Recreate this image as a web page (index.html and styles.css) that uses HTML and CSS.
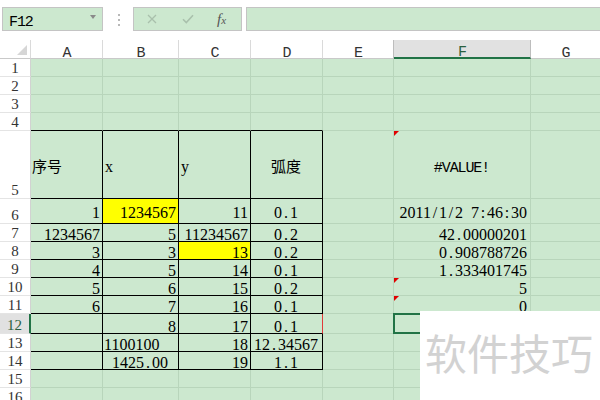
FILE: index.html
```html
<!DOCTYPE html>
<html>
<head>
<meta charset="utf-8">
<link rel="stylesheet" href="styles.css">
</head>
<body>
<div class="bar">
  <div class="namebox"><span class="nm">F12</span><span class="dd"></span></div>
  <div class="dots"><i></i><i></i><i></i></div>
  <div class="fxbox">
    <svg class="ic-x" width="10" height="10" viewBox="0 0 10 10"><path d="M1 1L9 9M9 1L1 9" stroke="#a9c0ac" stroke-width="1.3" fill="none"/></svg>
    <svg class="ic-ok" width="12" height="10" viewBox="0 0 12 10"><path d="M1 5.2L4.3 8.6L11 1.2" stroke="#a9c0ac" stroke-width="1.6" fill="none"/></svg>
    <span class="fx">f<span>x</span></span>
  </div>
  <div class="input"></div>
</div>
<div class="sheet">
  <div class="row hdr">
    <div class="ch corner"><svg width="10" height="10" viewBox="0 0 10 10"><polygon points="10,0 10,10 0,10" fill="#d6d6d6"/></svg></div>
    <div class="ch ca">A</div><div class="ch cb">B</div><div class="ch cc">C</div><div class="ch cd">D</div><div class="ch ce">E</div><div class="ch cf on">F</div><div class="ch cg">G</div>
  </div>
  <div class="row"><div class="rh">1</div><div class="c ca"></div><div class="c cb"></div><div class="c cc"></div><div class="c cd"></div><div class="c ce"></div><div class="c cf"></div><div class="c cg"></div></div>
  <div class="row"><div class="rh">2</div><div class="c ca"></div><div class="c cb"></div><div class="c cc"></div><div class="c cd"></div><div class="c ce"></div><div class="c cf"></div><div class="c cg"></div></div>
  <div class="row"><div class="rh">3</div><div class="c ca"></div><div class="c cb"></div><div class="c cc"></div><div class="c cd"></div><div class="c ce"></div><div class="c cf"></div><div class="c cg"></div></div>
  <div class="row"><div class="rh">4</div><div class="c ca tb"></div><div class="c cb tb"></div><div class="c cc tb"></div><div class="c cd tb"></div><div class="c ce"></div><div class="c cf"></div><div class="c cg"></div></div>
  <div class="row h5"><div class="rh">5</div><div class="c ca t cjk">序号</div><div class="c cb t">x</div><div class="c cc t">y</div><div class="c cd t cjk m">弧度</div><div class="c ce"></div><div class="c cf m mo"><span class="tri"></span>#VALUE!</div><div class="c cg"></div></div>
  <div class="row h6"><div class="rh">6</div><div class="c ca t r">1</div><div class="c cb t r y">1234567</div><div class="c cc t r">11</div><div class="c cd t m">0<b>.</b>1</div><div class="c ce"></div><div class="c cf r">2011<b>/</b>1<b>/</b>2<b></b>7<b>:</b>46<b>:</b>30</div><div class="c cg"></div></div>
  <div class="row"><div class="rh">7</div><div class="c ca t r">1234567</div><div class="c cb t r">5</div><div class="c cc t r">11234567</div><div class="c cd t m">0<b>.</b>2</div><div class="c ce"></div><div class="c cf r">42<b>.</b>00000201</div><div class="c cg"></div></div>
  <div class="row"><div class="rh">8</div><div class="c ca t r">3</div><div class="c cb t r">3</div><div class="c cc t r y">13</div><div class="c cd t m">0<b>.</b>2</div><div class="c ce"></div><div class="c cf r">0<b>.</b>908788726</div><div class="c cg"></div></div>
  <div class="row"><div class="rh">9</div><div class="c ca t r">4</div><div class="c cb t r">5</div><div class="c cc t r">14</div><div class="c cd t m">0<b>.</b>1</div><div class="c ce"></div><div class="c cf r">1<b>.</b>333401745</div><div class="c cg"></div></div>
  <div class="row"><div class="rh">10</div><div class="c ca t r">5</div><div class="c cb t r">6</div><div class="c cc t r">15</div><div class="c cd t m">0<b>.</b>2</div><div class="c ce"></div><div class="c cf r"><span class="tri"></span>5</div><div class="c cg"></div></div>
  <div class="row"><div class="rh">11</div><div class="c ca t r">6</div><div class="c cb t r">7</div><div class="c cc t r">16</div><div class="c cd t m">0<b>.</b>1</div><div class="c ce"></div><div class="c cf r"><span class="tri"></span>0</div><div class="c cg"></div></div>
  <div class="row h12"><div class="rh act">12</div><div class="c ca t"></div><div class="c cb t r">8</div><div class="c cc t r">17</div><div class="c cd t m red">0<b>.</b>1</div><div class="c ce"></div><div class="c cf"><span class="sel"></span></div><div class="c cg"></div></div>
  <div class="row"><div class="rh">13</div><div class="c ca t"></div><div class="c cb t">1100100</div><div class="c cc t r">18</div><div class="c cd t m">12<b>.</b>34567</div><div class="c ce"></div><div class="c cf"></div><div class="c cg"></div></div>
  <div class="row"><div class="rh">14</div><div class="c ca t"></div><div class="c cb t m">1425<b>.</b>00</div><div class="c cc t r">19</div><div class="c cd t m">1<b>.</b>1</div><div class="c ce"></div><div class="c cf"></div><div class="c cg"></div></div>
  <div class="row"><div class="rh">15</div><div class="c ca"></div><div class="c cb"></div><div class="c cc"></div><div class="c cd"></div><div class="c ce"></div><div class="c cf"></div><div class="c cg"></div></div>
  <div class="row"><div class="rh">16</div><div class="c ca"></div><div class="c cb"></div><div class="c cc"></div><div class="c cd"></div><div class="c ce"></div><div class="c cf"></div><div class="c cg"></div></div>
</div>
<div class="wm">软件技巧</div>
</body>
</html>
```

FILE: styles.css
```css
* { box-sizing: border-box; }
html, body { margin: 0; padding: 0; }
body {
  width: 600px; height: 400px; overflow: hidden; position: relative;
  background: #fff; color: #000;
  font-family: "Liberation Mono", monospace; font-size: 15px; letter-spacing: -1.1px;
}

/* formula bar */
.bar { height: 40px; display: flex; align-items: flex-start; padding-top: 7px; }
.namebox {
  margin-left: 2px; width: 101px; height: 24px; background: #cce8cf;
  border: 1px solid #c4c4c4; display: flex; align-items: flex-end;
  justify-content: space-between; padding: 0 6px 3px 6px; line-height: 9px;
}
.dd {
  align-self: flex-start; margin-top: 7px; width: 0; height: 0;
  border-left: 3.5px solid transparent; border-right: 3.5px solid transparent;
  border-top: 4px solid #8a8a8a;
}
.dots { margin-left: 15px; padding-top: 7px; display: flex; flex-direction: column; gap: 3px; }
.dots i { display: block; width: 2px; height: 2px; background: #b8b8b8; }
.fxbox {
  margin-left: 13px; width: 109px; height: 24px; background: #cce8cf;
  border: 1px solid #c4c4c4; display: flex; align-items: center; padding-left: 13px;
}
.ic-ok { margin-left: 25px; }
.fx {
  margin-left: 23px; font-family: "Liberation Serif", serif; font-style: italic;
  font-size: 15px; color: #555; letter-spacing: 0;
}
.fx span { font-size: 11px; }
.input {
  margin-left: 4px; flex: 1; height: 24px; background: #cce8cf;
  border: 1px solid #c4c4c4; margin-right: -2px;
}

/* sheet */
.row { display: flex; height: 18px; }
.row.hdr { height: 19px; }
.row.h5 { height: 68px; }
.row.h6 { height: 25px; }
.row.h12 { height: 20px; }

.ca { width: 72px; }
.cb { width: 76px; }
.cc { width: 72px; }
.cd { width: 72px; }
.ce { width: 71px; }
.cf { width: 137px; }
.cg { flex: 1; }

.ch, .rh, .c {
  display: flex; align-items: flex-end; line-height: 9px; white-space: nowrap; position: relative;
}
.ch {
  background: #fff; border-right: 1px solid #dadada; border-bottom: 1px solid #c9c9c9;
  justify-content: center; color: #333;
}
.ch.corner { width: 31px; justify-content: flex-end; padding: 0 3px 3px 0; }
.ch.on { background: #e1e1e1; border-bottom: 2px solid #217346; color: #2a6040; border-right-color: #bdbdbd; }
.ch.ce { border-right-color: #bdbdbd; }
.ch.cg { border-right: none; }

.rh {
  width: 31px; background: #fff; border-right: 1px solid #d2d2d2; border-bottom: 1px solid #e4e4e4;
  justify-content: center; padding-bottom: 3px; color: #333;
  font-family: "Liberation Serif", serif; font-size: 15px; letter-spacing: 0;
}
.rh.act { background: #e1e1e1; border-right: 2px solid #217346; color: #2a6040; }

.c {
  background: #cce8cf; border-right: 1px solid #b8d5bb; border-bottom: 1px solid #b8d5bb;
  padding: 0 2px 2px 1px;
  font-family: "Liberation Serif", serif; font-size: 16px; letter-spacing: 0;
}
.c b { display: inline-block; width: 8px; text-align: center; font-weight: normal; }
.c.cf { padding-right: 3px; }
.c.cg { border-right: none; }
.c.t { border-right-color: #000; border-bottom-color: #000; }
.c.tb { border-bottom-color: #000; }
.c.red { border-right-color: #e03a3a; }
.c.r { justify-content: flex-end; }
.c.m { justify-content: center; }
.c.y { background: #ffff00; }
.c.mo { font-family: "Liberation Mono", monospace; font-size: 15px; letter-spacing: -1.1px; }
.c.cjk { font-family: "Noto Sans CJK SC", sans-serif; font-size: 15px; letter-spacing: 0; }

.h5 .c { padding-bottom: 27px; padding-left: 2px; }
.h5 .c.mo { padding-bottom: 25px; }
.h5 .c.cjk { padding-bottom: 28px; padding-left: 1px; }
.h6 .c { padding-bottom: 6px; }

.tri {
  position: absolute; left: 0; top: 0; width: 0; height: 0;
  border-top: 5px solid #e00000; border-right: 5px solid transparent;
}
.sel {
  position: absolute; left: -1px; top: -1px; right: -1px; bottom: -1px;
  border: 2px solid #217346;
}

/* watermark */
.wm {
  position: absolute; left: 420px; top: 311px; width: 180px; height: 89px;
  background: #fff; color: #d2d2d2;
  font-family: "Noto Sans CJK SC", sans-serif; font-size: 42px; line-height: 42px;
  letter-spacing: 0; padding: 20px 0 0 5px; white-space: nowrap;
}
```
